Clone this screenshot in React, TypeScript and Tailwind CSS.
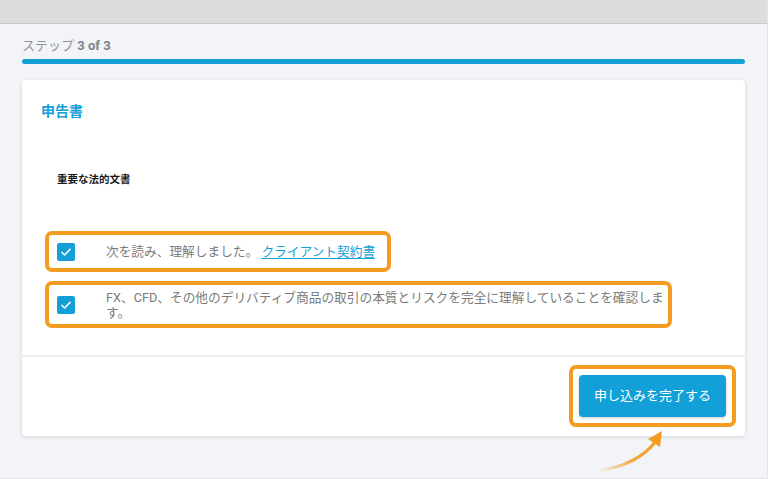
import React from "react";

const font = { fontFamily: '"Roboto", "Noto Sans CJK JP", sans-serif' };

const Check = () => (
  <span className="flex h-[18px] w-[18px] shrink-0 items-center justify-center rounded-[2px] bg-[#139fd8]">
    <svg viewBox="0 0 24 24" className="h-[14px] w-[14px]" fill="none" stroke="white" strokeWidth="2.6" strokeLinecap="round" strokeLinejoin="round">
      <path d="M5 12.5l4.5 4.5L19 7.5" />
    </svg>
  </span>
);

const App = () => {
  return (
    <div className="relative flex h-[479px] w-full flex-col overflow-hidden border-r border-b border-[#e3e4e8] bg-[#f3f4f8]" style={font}>
      <div className="h-[24px] shrink-0 border-b border-[#c9c9c9] bg-[#dddddd]"></div>

      <div className="pl-[22px] pr-[22px]">
        <div className="pt-[14px] text-[13px] leading-[16px] text-[#8e939a]">
          ステップ <span className="font-bold text-[#7d838b]">3 of 3</span>
        </div>
        <div className="mt-[5px] h-[5px] rounded-full bg-[#139fd8]"></div>

        <div className="mt-[16px] h-[356px] rounded-[4px] bg-white shadow-[0_1px_4px_rgba(0,0,0,0.13)]">
          <div className="h-[275px] pl-[19px] pt-[22px]">
            <h2 className="text-[14px] font-bold leading-[18px] text-[#139fd8]">申告書</h2>
            <div className="ml-[16px] mt-[53px] text-[10.5px] font-bold leading-[14px] text-[#1a1a1a]">重要な法的文書</div>

            <div className="ml-[4px] mt-[44px] flex h-[41px] w-[346px] items-center rounded-[7px] border-4 border-[#f39c1f] pl-[8px]">
              <Check />
              <p className="ml-[31px] whitespace-nowrap text-[12.7px] leading-[16px] text-[#7b7b7b]">
                次を読み、理解しました。{" "}
                <a className="text-[#139fd8] underline underline-offset-2">クライアント契約書</a>
              </p>
            </div>

            <div className="ml-[4px] mt-[9px] flex h-[47px] w-[627px] items-center rounded-[7px] border-4 border-[#f39c1f] pl-[8px]">
              <Check />
              <p className="ml-[31px] whitespace-nowrap text-[12.7px] leading-[15px] text-[#7b7b7b]">
                FX、CFD、その他のデリバティブ商品の取引の本質とリスクを完全に理解していることを確認しま
                <br />
                す。
              </p>
            </div>
          </div>

          <div className="h-[2px] bg-[#efefef]"></div>

          <div className="flex justify-end pr-[9px] pt-[8px]">
            <div className="rounded-[7px] border-4 border-[#f39c1f] bg-white p-[6px]">
              <button className="h-[42px] w-[147px] rounded-[4px] bg-[#139fd8] text-[13px] text-white shadow-[0_1px_3px_rgba(0,0,0,0.2)]">
                申し込みを完了する
              </button>
            </div>
          </div>
        </div>
      </div>

      <svg className="absolute left-[590px] top-[425px] h-[52px] w-[80px]" viewBox="0 0 80 52" fill="none">
        <defs>
          <linearGradient id="arrowFade" x1="0" y1="1" x2="1" y2="0">
            <stop offset="0" stopColor="#f39c1f" stopOpacity="0" />
            <stop offset="0.45" stopColor="#f39c1f" stopOpacity="0.85" />
            <stop offset="1" stopColor="#f39c1f" />
          </linearGradient>
        </defs>
        <path d="M8 46 Q48 40 66 16" stroke="url(#arrowFade)" strokeWidth="3" strokeLinecap="round" />
        <path d="M72 6 L58 14 L70 22 Z" fill="#f39c1f" />
      </svg>
    </div>
  );
};

export default App;
